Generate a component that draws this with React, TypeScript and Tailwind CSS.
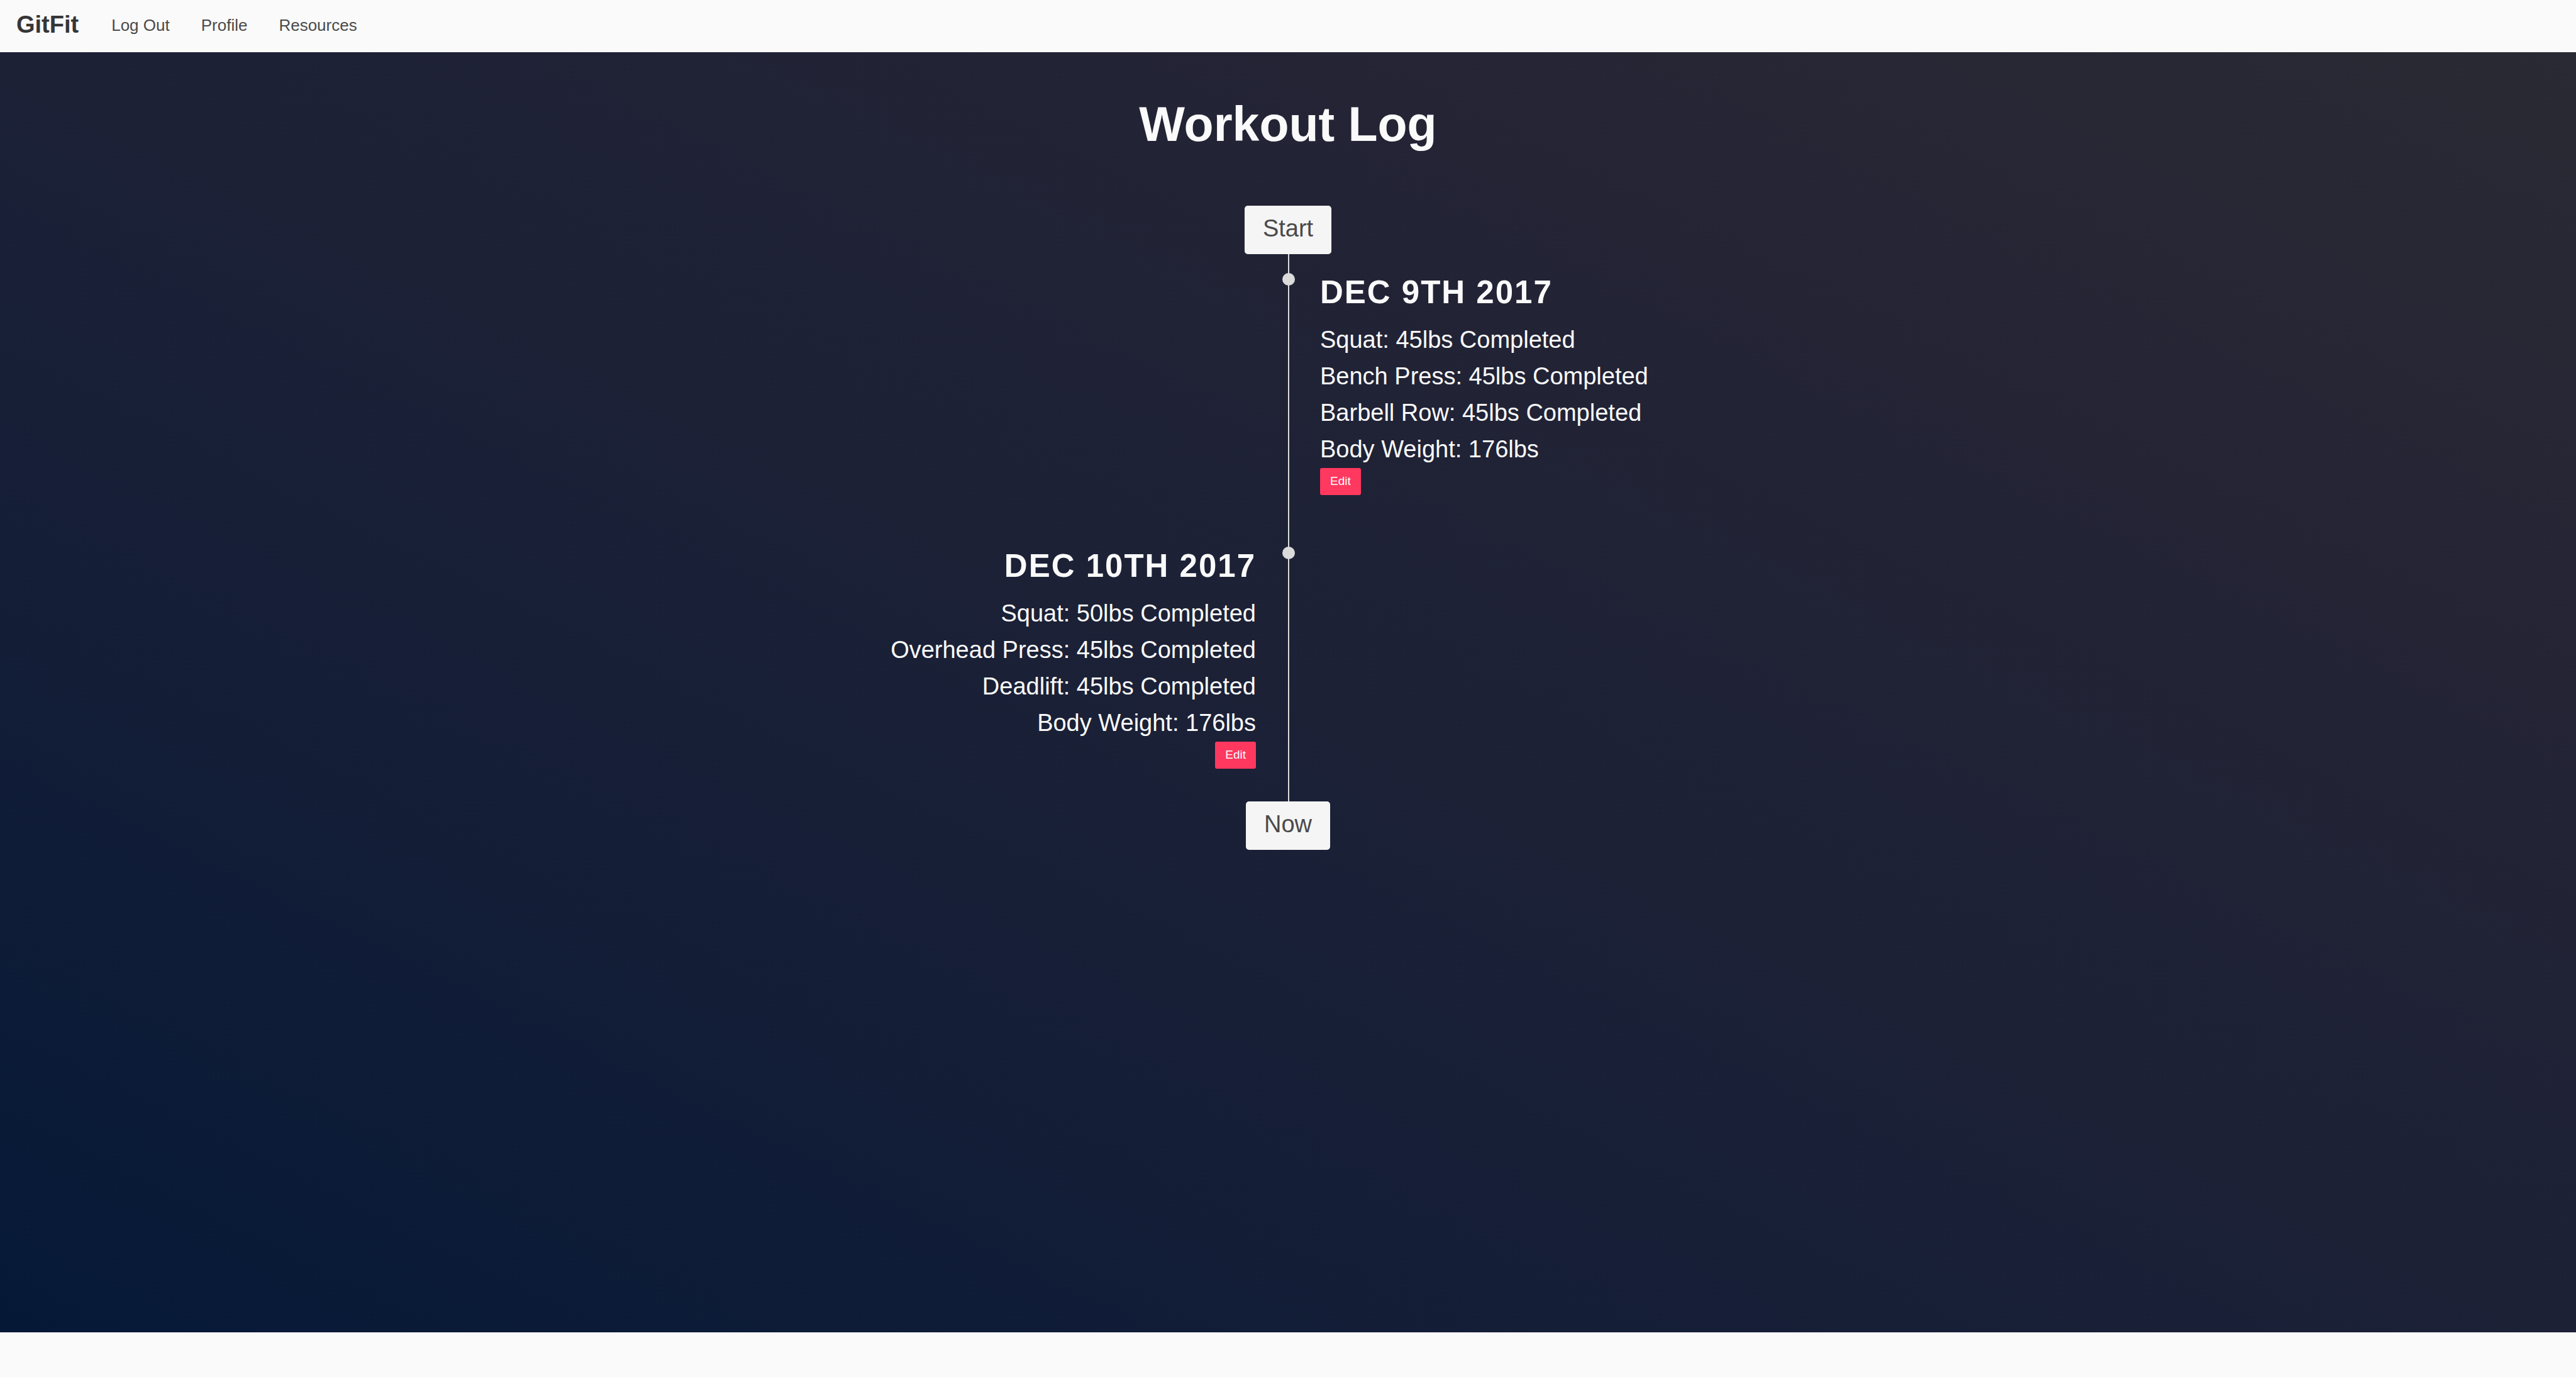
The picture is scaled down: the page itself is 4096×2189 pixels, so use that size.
type Workout = { date: string; lines: string[]; side: "left" | "right" };

const workouts: Workout[] = [
  {
    date: "DEC 9TH 2017",
    side: "right",
    lines: [
      "Squat: 45lbs Completed",
      "Bench Press: 45lbs Completed",
      "Barbell Row: 45lbs Completed",
      "Body Weight: 176lbs",
    ],
  },
  {
    date: "DEC 10TH 2017",
    side: "left",
    lines: [
      "Squat: 50lbs Completed",
      "Overhead Press: 45lbs Completed",
      "Deadlift: 45lbs Completed",
      "Body Weight: 176lbs",
    ],
  },
];

const links = ["Log Out", "Profile", "Resources"];

function Navbar() {
  return (
    <nav className="flex h-[83px] items-stretch bg-[#fafafa]">
      <a href="#" className="flex items-center pr-[27px] pb-[6px] pl-[26px] text-[38px] leading-none font-bold text-[#363636]">
        GitFit
      </a>
      {links.map((label) => (
        <a key={label} href="#" className="flex items-center px-[25px] pb-1 text-[26px] leading-none text-[#4a4a4a]">
          {label}
        </a>
      ))}
    </nav>
  );
}

function Tag({ label }: { label: string }) {
  return (
    <span className="flex h-[77px] items-center rounded-[5px] bg-[#f5f5f5] px-[29px] pb-[6px] text-[38px] leading-none text-[#4a4a4a]">
      {label}
    </span>
  );
}

function Details({ workout }: { workout: Workout }) {
  return (
    <>
      <h2 className="mb-[17px] text-[51px] leading-[58px] font-bold tracking-[2px]">{workout.date}</h2>
      {workout.lines.map((line) => (
        <p key={line} className="text-[38px] leading-[58px]">
          {line}
        </p>
      ))}
      <button type="button" className="mt-px flex h-[43px] items-center rounded-[3px] bg-[#ff3860] px-4 pb-[2px] text-[19px] leading-none text-white">
        Edit
      </button>
    </>
  );
}

function TimelineItem({ workout }: { workout: Workout }) {
  return (
    <li className="grid w-full grid-cols-2">
      <div className="flex flex-col items-end pt-8 pr-[51px] pb-[52px] text-right">
        {workout.side === "left" && <Details workout={workout} />}
      </div>
      <div className="relative flex flex-col items-start border-l-2 border-[#dbdbdb] pt-8 pb-[52px] pl-[49px]">
        <span className="absolute top-[30px] -left-[11px] size-5 rounded-full bg-[#dbdbdb]" />
        {workout.side === "right" && <Details workout={workout} />}
      </div>
    </li>
  );
}

export default function App() {
  return (
    <div className="flex min-h-screen flex-col bg-[#fafafa] font-['Liberation_Sans',Arial,sans-serif]">
      <Navbar />
      <main className="flex flex-1 flex-col items-center bg-[linear-gradient(to_top_right,#051937_0%,#121d37_25%,#1c2136_50%,#242435_75%,#2a2a34_100%)] pt-[66px] text-[#fafafa]">
        <h1 className="mb-[82px] text-[77px] leading-[96px] font-bold">Workout Log</h1>
        <Tag label="Start" />
        <ol className="w-full">
          {workouts.map((workout) => (
            <TimelineItem key={workout.date} workout={workout} />
          ))}
        </ol>
        <Tag label="Now" />
      </main>
      <footer className="h-[71px] bg-[#fafafa]" />
    </div>
  );
}
